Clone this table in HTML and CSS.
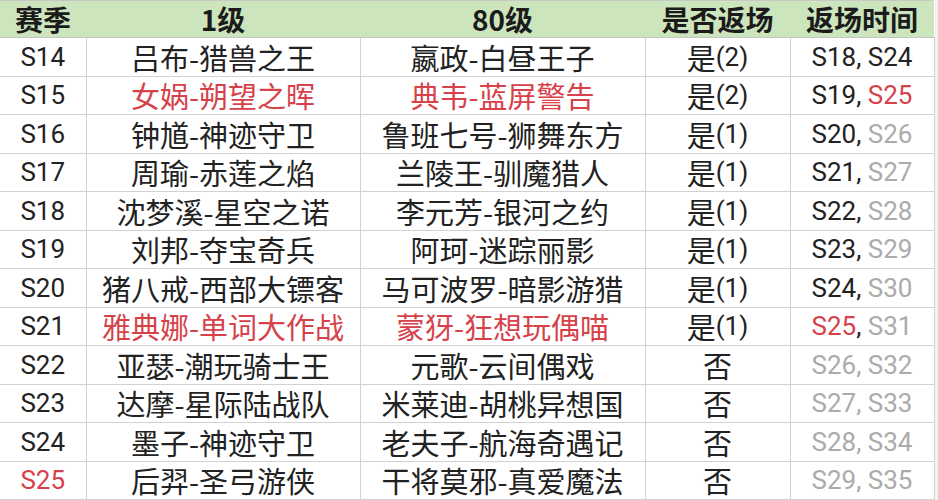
FILE: index.html
```html
<!DOCTYPE html>
<html lang="zh-CN">
<head>
<meta charset="utf-8">
<link rel="stylesheet" href="styles.css">
</head>
<body>
<table class="sheet">
  <colgroup>
    <col class="c1"><col class="c2"><col class="c3"><col class="c4"><col class="c5">
  </colgroup>
  <thead>
    <tr><th>赛季</th><th>1级</th><th>80级</th><th>是否返场</th><th>返场时间</th></tr>
  </thead>
  <tbody>
    <tr><td>S14</td><td class="cn">吕布-猎兽之王</td><td class="cn">嬴政-白昼王子</td><td><span class="cj">是</span>(2)</td><td>S18, S24</td></tr>
    <tr><td>S15</td><td class="cn red">女娲-朔望之晖</td><td class="cn red">典韦-蓝屏警告</td><td><span class="cj">是</span>(2)</td><td>S19, <span class="red">S25</span></td></tr>
    <tr><td>S16</td><td class="cn">钟馗-神迹守卫</td><td class="cn">鲁班七号-狮舞东方</td><td><span class="cj">是</span>(1)</td><td>S20, <span class="grey">S26</span></td></tr>
    <tr><td>S17</td><td class="cn">周瑜-赤莲之焰</td><td class="cn">兰陵王-驯魔猎人</td><td><span class="cj">是</span>(1)</td><td>S21, <span class="grey">S27</span></td></tr>
    <tr><td>S18</td><td class="cn">沈梦溪-星空之诺</td><td class="cn">李元芳-银河之约</td><td><span class="cj">是</span>(1)</td><td>S22, <span class="grey">S28</span></td></tr>
    <tr><td>S19</td><td class="cn">刘邦-夺宝奇兵</td><td class="cn">阿珂-迷踪丽影</td><td><span class="cj">是</span>(1)</td><td>S23, <span class="grey">S29</span></td></tr>
    <tr><td>S20</td><td class="cn">猪八戒-西部大镖客</td><td class="cn">马可波罗-暗影游猎</td><td><span class="cj">是</span>(1)</td><td>S24, <span class="grey">S30</span></td></tr>
    <tr><td>S21</td><td class="cn red">雅典娜-单词大作战</td><td class="cn red">蒙犽-狂想玩偶喵</td><td><span class="cj">是</span>(1)</td><td><span class="red">S25</span>, <span class="grey">S31</span></td></tr>
    <tr><td>S22</td><td class="cn">亚瑟-潮玩骑士王</td><td class="cn">元歌-云间偶戏</td><td><span class="cj">否</span></td><td class="grey">S26, S32</td></tr>
    <tr><td>S23</td><td class="cn">达摩-星际陆战队</td><td class="cn">米莱迪-胡桃异想国</td><td><span class="cj">否</span></td><td class="grey">S27, S33</td></tr>
    <tr><td>S24</td><td class="cn">墨子-神迹守卫</td><td class="cn">老夫子-航海奇遇记</td><td><span class="cj">否</span></td><td class="grey">S28, S34</td></tr>
    <tr><td class="red">S25</td><td class="cn">后羿-圣弓游侠</td><td class="cn">干将莫邪-真爱魔法</td><td><span class="cj">否</span></td><td class="grey">S29, S35</td></tr>
  </tbody>
</table>
</body>
</html>
```
FILE: styles.css
```css
html, body {
  margin: 0;
  padding: 0;
  background: #eef0f2;
}
.sheet {
  width: 934px;
  border-collapse: collapse;
  table-layout: fixed;
  background: #fff;
  font-family: Roboto, "Noto Sans CJK SC", sans-serif;
  color: #222;
  border-top: 1px solid #c8c8c8;
}
.c1 { width: 86px; }
.c2 { width: 274px; }
.c3 { width: 285px; }
.c4 { width: 145px; }
.c5 { width: 144px; }
.sheet th {
  background: #cde5bd;
  height: 36px;
  padding: 0;
  font-size: 28px;
  line-height: 36px;
  font-weight: 700;
  color: #1b1b1b;
  text-align: center;
  border-bottom: 1px solid #c4c4c4;
  font-family: "Noto Sans CJK SC", sans-serif;
}
.sheet td {
  height: 37.5px;
  padding: 0;
  font-size: 26px;
  text-align: center;
  border: 1px solid #d2d2d2;
  line-height: 30px;
  white-space: nowrap;
}
.sheet td:first-child { border-left: none; }
.sheet td.cn {
  font-family: "Noto Sans CJK SC", sans-serif;
  font-size: 29px;
}
.cj {
  font-family: "Noto Sans CJK SC", sans-serif;
  font-size: 29px;
  vertical-align: top;
}
.red { color: #d6414a; }
.grey { color: #ababab; }
```
